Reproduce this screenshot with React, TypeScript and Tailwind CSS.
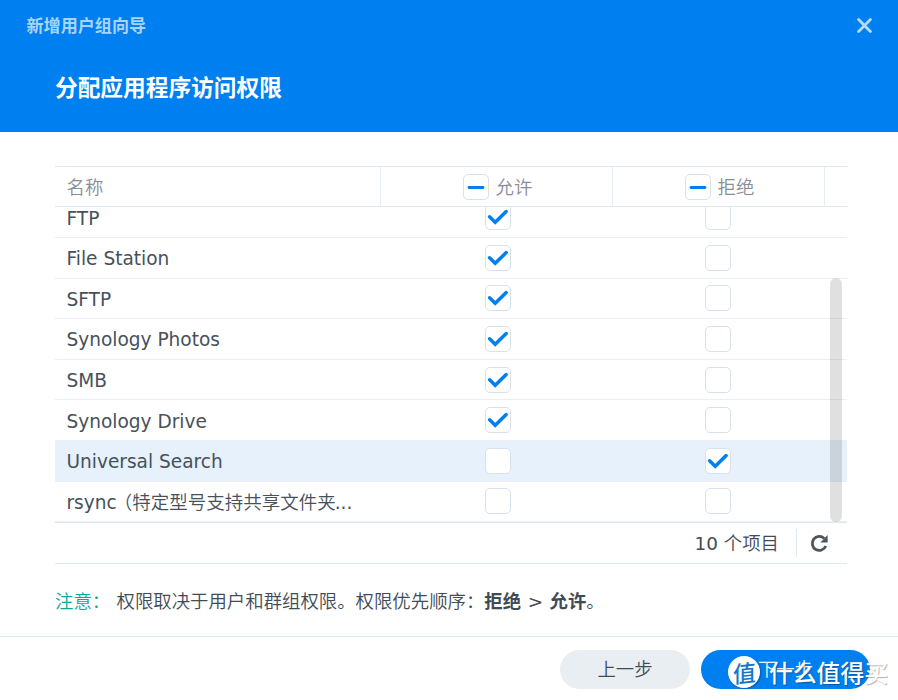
import { useState } from 'react';
import clsx from 'clsx';

type Choice = 'allow' | 'deny' | null;

interface AppRow {
  name: string;
  note?: string;
  choice: Choice;
}

const INITIAL_ROWS: AppRow[] = [
  { name: 'FTP', choice: 'allow' },
  { name: 'File Station', choice: 'allow' },
  { name: 'SFTP', choice: 'allow' },
  { name: 'Synology Photos', choice: 'allow' },
  { name: 'SMB', choice: 'allow' },
  { name: 'Synology Drive', choice: 'allow' },
  { name: 'Universal Search', choice: 'deny' },
  { name: 'rsync', note: '（特定型号支持共享文件夹', choice: null },
];

function Checkbox({ checked, partial, onClick }: { checked?: boolean; partial?: boolean; onClick?: () => void }) {
  return (
    <button
      role="checkbox"
      aria-checked={partial ? 'mixed' : !!checked}
      onClick={onClick}
      className="block size-[26px] shrink-0 rounded-[5px] border-[1.5px] border-[#d8e1ea] bg-white"
    >
      <svg viewBox="0 0 24 24" className="size-6" fill="none" stroke="#0080f0" strokeWidth="3" strokeLinecap="round">
        {partial && <path d="M5 12.5H19" strokeWidth="2.8" />}
        {checked && <path d="M3.6 11.8L9.2 17.2L20.2 6.6" strokeWidth="3.5" />}
      </svg>
    </button>
  );
}

export default function App() {
  const [rows, setRows] = useState(INITIAL_ROWS);
  const [selected, setSelected] = useState(6);

  const toggle = (index: number, choice: Choice) => {
    setRows(rows.map((r, i) => (i === index ? { ...r, choice: r.choice === choice ? null : choice } : r)));
  };

  return (
    <div className="flex h-[700px] w-[898px] flex-col overflow-hidden bg-white font-['DejaVu_Sans','Noto_Sans_CJK_SC',sans-serif] text-[18.4px] leading-6 text-[#414b55]">
      <header className="h-[132px] shrink-0 bg-[#0080f0] text-white">
        <div className="flex h-[50px] items-center justify-between pr-[26px] pl-[26.5px]">
          <h1 className="font-['Noto_Sans_CJK_SC',sans-serif] text-[17.1px] font-bold text-[#a9d4fa]">新增用户组向导</h1>
          <button aria-label="关闭">
            <svg viewBox="0 0 15 15" className="size-[15px]" stroke="#b5dafb" strokeWidth="2.8" strokeLinecap="round">
              <path d="M1.6 1.6L13.4 13.4M13.4 1.6L1.6 13.4" />
            </svg>
          </button>
        </div>
        <h2 className="pt-[21px] pl-[55px] font-['Noto_Sans_CJK_SC',sans-serif] text-[22.7px] leading-8 font-bold">分配应用程序访问权限</h2>
      </header>

      <main className="h-[504px] shrink-0 pt-[34px] pr-[51px] pl-[55px]">
        <div className="flex h-[41px] border-y border-[#e1e9f0] text-[#888e94]">
          <div className="flex w-[326px] items-center border-r border-[#e6edf3] pt-[3px] pl-[11.5px] font-[350]">名称</div>
          <div className="flex w-[232px] items-center justify-center gap-[7px] border-r border-[#e6edf3] pt-px pl-[2px] font-[350]">
            <Checkbox partial />
            <span className="pt-[2px]">允许</span>
          </div>
          <div className="flex w-[212px] items-center justify-center gap-[7px] border-r border-[#e6edf3] pt-px pl-[2px] font-[350]">
            <Checkbox partial />
            <span className="pt-[2px]">拒绝</span>
          </div>
        </div>

        <div className="relative h-[315px] overflow-hidden">
          <div className="-mt-[9.6px]">
            {rows.map((row, i) => (
              <div
                key={row.name}
                onClick={() => setSelected(i)}
                className={clsx(
                  'flex h-[40.6px] items-center border-b border-[#e9eff4]',
                  i === selected && 'bg-[#e6f1fb]'
                )}
              >
                <div className="flex w-[326px] pt-[3px] pl-[11.5px] text-[18.55px] whitespace-nowrap text-[#47515b]">
                  {row.name}
                  {row.note && (
                    <>
                      <span className="-ml-[3px] text-[18.5px] font-[350]">{row.note}</span>
                      <span className="-ml-px">...</span>
                    </>
                  )}
                </div>
                <div className="flex w-[233px] justify-center">
                  <Checkbox checked={row.choice === 'allow'} onClick={() => toggle(i, 'allow')} />
                </div>
                <div className="flex w-[208px] justify-center">
                  <Checkbox checked={row.choice === 'deny'} onClick={() => toggle(i, 'deny')} />
                </div>
              </div>
            ))}
          </div>
          {/* Scrollbar thumb */}
          <div className="absolute right-[5px] bottom-0 h-[244px] w-[12px] rounded-full bg-black/12" />
        </div>

        <div className="flex h-[42px] items-center justify-end border-t border-b border-t-[#dfe7ee] border-b-[#dfe7ee] pr-[18px]">
          <span className="pt-px">
            10 <span className="font-[350]">个项目</span>
          </span>
          <span className="ml-[17px] h-7 w-px bg-[#dfe6ec]" />
          <button aria-label="刷新" className="ml-[13px]">
            <svg viewBox="0 0 19 19" className="size-[19px]" fill="none">
              <path d="M14.2 4.4A7 7 0 1 0 15.8 12" stroke="#4b5660" strokeWidth="2.8" />
              <path d="M17.6 1V8.4H10.4Z" fill="#4b5660" />
            </svg>
          </button>
        </div>

        <p className="flex pt-[26px] font-[350] whitespace-pre">
          <span className="w-[61.5px] text-[#0aa8a0]">注意：</span>
          <span>权限取决于用户和群组权限。权限优先顺序：</span>
          <b className="font-bold">拒绝</b>
          <span className="px-[6.5px] font-normal">&gt;</span>
          <b className="font-bold">允许</b>
          <span>。</span>
        </p>
      </main>

      <footer className="relative flex grow justify-end border-t border-[#e1e9f0] pt-[13px] pr-[28px] font-[350]">
        <button className="h-[39px] w-[130px] rounded-full bg-[#e9eef3] pt-px">上一步</button>
        <button className="ml-[11px] h-[39px] w-[169px] rounded-full bg-[#0080f0] text-white/90">下一步</button>
        {/* Watermark */}
        <div className="pointer-events-none absolute top-[19px] left-[728px] flex items-center font-['Noto_Sans_CJK_SC',sans-serif]">
          <span className="flex size-[32px] items-center justify-center rounded-full bg-white text-[23px] font-medium text-[#1477c8] shadow-[1px_1px_2px_rgba(0,0,0,0.3)]">
            <i className="-skew-x-6 -rotate-6 not-italic">值</i>
          </span>
          <span className="ml-[9px] text-[23.8px] font-medium whitespace-nowrap text-white [text-shadow:1px_1px_1px_rgba(0,0,0,0.3)]">什么值得买</span>
        </div>
      </footer>
    </div>
  );
}
